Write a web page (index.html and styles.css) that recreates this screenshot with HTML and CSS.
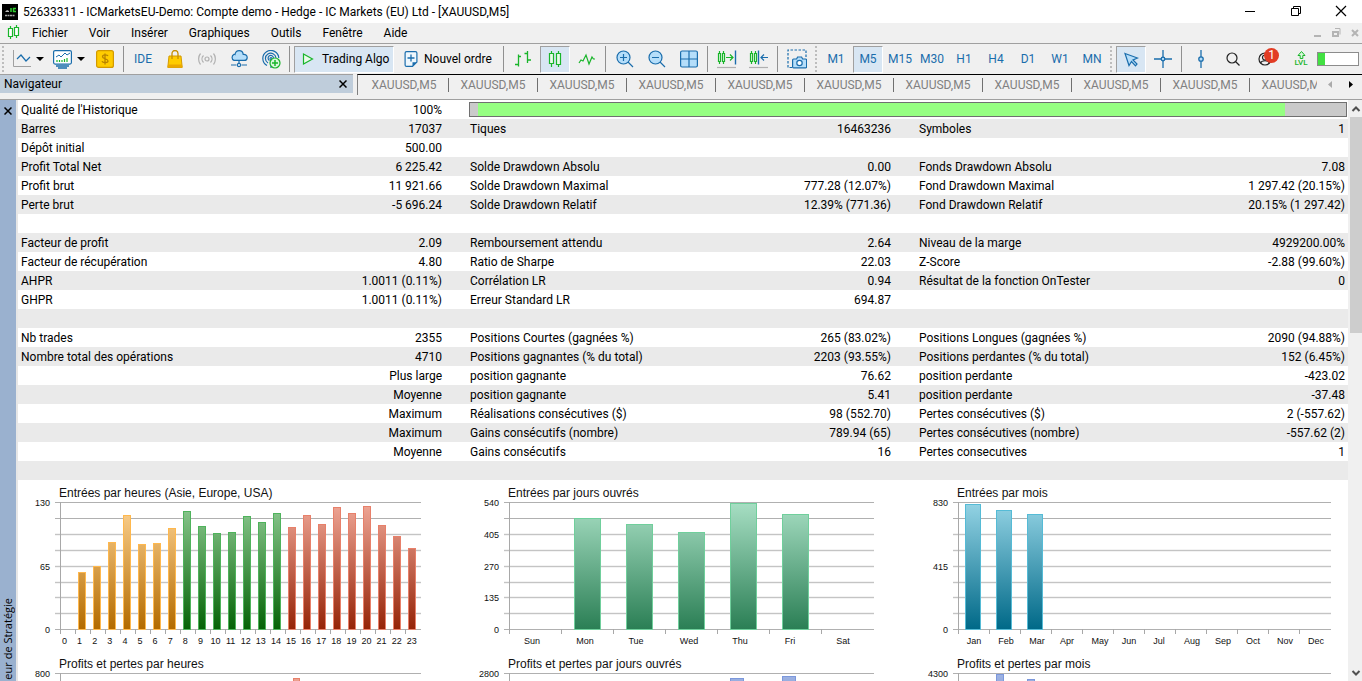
FILE: index.html
```html
<!DOCTYPE html>
<html lang="fr">
<head>
<meta charset="utf-8">
<title>52633311 - ICMarketsEU-Demo</title>
<link rel="stylesheet" href="styles.css">
</head>
<body>
<header class="titlebar">
  <svg class="app-icon" width="16" height="16" viewBox="0 0 16 16"><rect width="16" height="16" fill="#000"/><path d="M3 8l2-2 2 1v1z" fill="#bbb"/><path d="M9 4v4M14 4.500h-2.500v3h2.500" stroke="#2fd02f" stroke-width="1.500" fill="none"/><path d="M3 11.500h10" stroke="#aaa" stroke-width="1.500" stroke-dasharray="2 .5"/></svg>
  <h1 class="title">52633311 - ICMarketsEU-Demo: Compte demo - Hedge - IC Markets (EU) Ltd - [XAUUSD,M5]</h1>
  <div class="win-buttons">
    <button class="win-btn" aria-label="Réduire"><svg width="12" height="12"><path d="M1 6.500h10" stroke="#000"/></svg></button>
    <button class="win-btn" aria-label="Restaurer"><svg width="12" height="12" fill="none" stroke="#000"><path d="M1.500 3.500h7v7h-7zM3.500 3.500v-2h7v7h-2"/></svg></button>
    <button class="win-btn" aria-label="Fermer"><svg width="12" height="12"><path d="M1 1l10 10M11 1L1 11" stroke="#000" stroke-width="1.200"/></svg></button>
  </div>
</header>
<nav class="menubar">
  <svg class="menu-icon" width="13" height="16" fill="#fff" stroke="#19b52a" stroke-width="1.200"><path d="M3.500 1v13M9.500 0v13"/><path d="M1.500 3.500h4v8h-4zM7.500 2.500h4v8h-4z"/></svg>
  <button class="menu">Fichier</button><button class="menu">Voir</button><button class="menu">Insérer</button><button class="menu">Graphiques</button><button class="menu">Outils</button><button class="menu">Fenêtre</button><button class="menu">Aide</button>
  <div class="mdi-buttons">
    <svg width="9" height="10"><path d="M1 8h7" stroke="#b4b4b4" stroke-width="2"/></svg>
    <svg width="9" height="10" fill="none" stroke="#b4b4b4"><path d="M1 4h5v4H1z" stroke-width="2"/><path d="M3 .500h5v6"/></svg>
    <svg width="9" height="10"><path d="M1 2l6 6M7 2L1 8" stroke="#b4b4b4" stroke-width="2"/></svg>
  </div>
</nav>
<div class="toolbar">
  <span class="grip first"></span>
  <button class="drop" aria-label="Graphique"><svg width="18" height="18" fill="none"><path d="M.500 0v16.500H18" stroke="#a0a0a0"/><path d="M4 9l4-4 5 6 4-4" stroke="#1a6dac" stroke-width="1.200"/></svg><i class="caret"></i></button>
  <button class="drop" aria-label="Indicateurs"><svg width="19" height="20" fill="none"><rect x=".6" y="1.600" width="17.800" height="13.500" rx="1.500" fill="#fff" stroke="#1a6dac" stroke-width="1.200"/><path d="M3 8l3-2 2 2 4-4 2 2 3-2" stroke="#1a6dac"/><path d="M4 13v-2M6.500 13v-2M9 13v-2M11.500 13v-3M14 13v-4" stroke="#19b52a" stroke-width="1.200"/><path d="M3 17h13M5 19h9" stroke="#1a6dac" stroke-width="1.500"/></svg><i class="caret"></i></button>
  <button class="tool" aria-label="Dollar"><svg width="18" height="18"><rect x=".6" y=".6" width="16.800" height="16.800" rx="2" fill="#fc0" stroke="#d39a00" stroke-width="1.200"/><path d="M12 6c-.5-1.400-5.500-1.700-5.500.7 0 2.300 5.500 1.800 5.500 4.200 0 2.200-5.500 2-6 .2M9 3.500v11" fill="none" stroke="#b88300" stroke-width="1.300"/></svg></button>
  <span class="sep"></span>
  <button class="tool tf">IDE</button>
  <button class="tool" aria-label="Market"><svg width="16" height="18"><path d="M2 6h12l1.200 11.400H.8z" fill="#fc0" stroke="#d39a00"/><path d="M1 14.500h14l.4 3H.6z" fill="#eba800"/><path d="M5 9V3.500a3 3 0 0 1 6 0V9" fill="none" stroke="#c68e00" stroke-width="1.300"/></svg></button>
  <button class="tool" aria-label="Signaux"><svg width="18" height="14" fill="none" stroke="#b0b0b0" stroke-width="1.200"><circle cx="9" cy="7" r="2"/><path d="M5.500 3.500c-2 2-2 5 0 7M12.500 3.500c2 2 2 5 0 7M2.500 1.500c-2.500 3-2.500 8 0 11M15.500 1.500c2.500 3 2.500 8 0 11"/></svg></button>
  <button class="tool" aria-label="VPS"><svg width="18" height="18" stroke="#1a6dac" stroke-width="1.200"><path d="M4 10.400a3.300 3.300 0 0 1 0-6c.5 0 .8 0 1 .1C5.500 2 7.200.7 9.200.7c2.300 0 3.700 1.500 4 3.700 2.800-.2 4 1.400 4 3s-1.200 3-3 3z" fill="#b5defa"/><path d="M9 10.500v3M1 15h5.500M11.500 15H17" fill="none"/><circle cx="9" cy="15" r="1.600" fill="#fff"/></svg></button>
  <button class="tool" aria-label="Connexion"><svg width="19" height="19" fill="none" stroke="#1a6dac" stroke-width="1.200"><path d="M5 15.500A8 8 0 1 1 16.800 8M6 13A5.300 5.300 0 1 1 14 8M7.500 10.500A2.700 2.700 0 1 1 11.500 8"/><circle cx="9" cy="8.500" r="1"/><path d="M9 10v8"/><circle cx="13" cy="13" r="5" fill="#d9f7dc" stroke="#19b52a"/><path d="M13 10v6M10 13h6" stroke="#19b52a" stroke-width="1.500"/></svg></button>
  <span class="sep"></span>
  <button class="wide pressed"><svg width="12" height="12"><path d="M1.500 1l9 5-9 5z" fill="#eafbea" stroke="#19b52a" stroke-width="1.200"/></svg>Trading Algo</button>
  <button class="wide order"><svg width="14" height="18"><path d="M2.600 1.600h8.800q1.500 0 1.500 1.500v9l-4.400 4.300H2.600q-1.500 0-1.500-1.500V3.100q0-1.500 1.500-1.500z" fill="#eef7fd" stroke="#1a6dac" stroke-width="1.200"/><path d="M8.500 16.500v-4.300H13z" fill="#1a6dac"/><path d="M7 4.500v7M3.500 8h7" stroke="#1a6dac" stroke-width="1.300"/></svg>Nouvel ordre</button>
  <span class="sep"></span>
  <button class="tool" aria-label="Barres"><svg width="18" height="18" fill="none" stroke="#19b52a" stroke-width="1.300"><path d="M4.500 4.500v12M1 14.500h3.500M4.500 6.500H7M13.500 1v12M10.500 3.500h3M13.500 10H17"/></svg></button>
  <button class="tool pressed" aria-label="Chandeliers"><svg width="14" height="18" fill="#eafbea" stroke="#19b52a" stroke-width="1.200"><path d="M3.500 1v16M10.500 1v16"/><path d="M1.500 3.500h4v10h-4zM8.500 3.500h4v11h-4z"/></svg></button>
  <button class="tool" aria-label="Ligne"><svg width="18" height="14"><path d="M1 11l2-3 2 1 3-6 3 9 3-7 1.500 2H17" fill="none" stroke="#19b52a" stroke-width="1.200"/></svg></button>
  <span class="sep"></span>
  <button class="tool" aria-label="Zoom avant"><svg width="18" height="18" stroke="#1a6dac" stroke-width="1.200"><circle cx="7.500" cy="7.500" r="6.500" fill="#b5defa"/><path d="M4 7.500h7M7.500 4v7M12 12l5 5"/></svg></button>
  <button class="tool" aria-label="Zoom arrière"><svg width="18" height="18" stroke="#1a6dac" stroke-width="1.200"><circle cx="7.500" cy="7.500" r="6.500" fill="#b5defa"/><path d="M4 7.500h7M12 12l5 5"/></svg></button>
  <button class="tool" aria-label="Mosaïque"><svg width="18" height="18" stroke="#1a6dac" stroke-width="1.200"><rect x=".6" y="1" width="16.800" height="16" rx="1.500" fill="#b5defa"/><path d="M9 1v16M1 9h16"/></svg></button>
  <span class="sep"></span>
  <button class="tool" aria-label="Défilement"><svg width="20" height="20" fill="none" stroke="#19b52a" stroke-width="1.200"><path d="M2.500 2v13M6.500 2v13"/><path d="M1.500 4.500h2v8h-2zM5.500 4.500h2v8h-2z" fill="#eafbea"/><path d="M9 8.500h7M13 5.500l3 3-3 3"/><path d="M18.500 1.500v14" stroke="#1a6dac" stroke-width="1.400"/><path d="M0 18.500h19" stroke="#b0b0b0"/></svg></button>
  <button class="tool" aria-label="Décalage"><svg width="20" height="20" fill="none" stroke="#19b52a" stroke-width="1.200"><path d="M2.500 2v13M6.500 2v13"/><path d="M1.500 4.500h2v8h-2zM5.500 4.500h2v8h-2z" fill="#eafbea"/><path d="M9.500 1.500v14" stroke="#1a6dac" stroke-width="1.400"/><path d="M19 8.500h-7M15 5.500l-3 3 3 3" stroke="#1a6dac"/><path d="M0 18.500h19" stroke="#b0b0b0"/></svg></button>
  <span class="sep"></span>
  <button class="tool" aria-label="Capture"><svg width="20" height="20" fill="none" stroke="#1a6dac" stroke-width="1.200"><path d="M5 18.500H1V1h18v8" stroke-dasharray="2.500 1.500"/><path d="M6.600 10h3l1-2h4l1 2h3q1 0 1 1v7q0 .8-1 .8h-12q-1 0-1-.8v-7q0-1 1-1z" fill="#b5defa"/><circle cx="12.500" cy="14" r="2.700" fill="#fff"/></svg></button>
  <span class="grip"></span>
  <button class="tool tf">M1</button><button class="tool tf pressed">M5</button><button class="tool tf">M15</button><button class="tool tf">M30</button><button class="tool tf">H1</button><button class="tool tf">H4</button><button class="tool tf">D1</button><button class="tool tf">W1</button><button class="tool tf">MN</button>
  <span class="grip"></span>
  <button class="tool pressed" aria-label="Curseur"><svg width="15" height="15"><path d="M1 1.500l12.500 4.500-4.500 2 4 4-1.500 1.800-4-4.300-2.500 4z" fill="#b5defa" stroke="#1a6dac" stroke-width="1.200"/></svg></button>
  <button class="tool" aria-label="Réticule"><svg width="18" height="18" stroke="#1a6dac" stroke-width="1.300"><path d="M9 0v18M0 9h18"/><circle cx="9" cy="9" r="1.800" fill="#b5defa"/></svg></button>
  <span class="sep"></span>
  <button class="tool" aria-label="Ligne verticale"><svg width="18" height="18" stroke="#1a6dac" stroke-width="1.300"><path d="M9 0v18"/><circle cx="9" cy="9" r="2.200" fill="#b5defa"/></svg></button>
  <button class="tool" aria-label="Rechercher"><svg width="14" height="14" fill="none" stroke="#222" stroke-width="1.200"><circle cx="6" cy="6" r="5"/><path d="M9.500 9.500l4 4"/></svg></button>
  <button class="tool profile" aria-label="Profil"><svg width="14" height="14" fill="none" stroke="#222" stroke-width="1.200"><circle cx="7" cy="7" r="6"/><circle cx="7" cy="5.500" r="2.500"/><path d="M2.500 11c1-3 8-3 9 0"/></svg><span class="badge">1</span></button>
  <div class="level"><svg width="9" height="8"><path d="M3.200 7.500v-3H1l3.500-4 3.500 4H5.800v3z" fill="#d9f7dc" stroke="#19b52a"/></svg><span>LVL</span></div>
  <div class="meter"><i class="meter-fill"></i></div>
</div>
<div class="dock">
  <div class="navhead"><span>Navigateur</span><button class="close" aria-label="Fermer le navigateur"><svg width="8" height="8"><path d="M.500.500l7 7M7.500.500l-7 7" stroke="#000" stroke-width="1.500"/></svg></button></div>
  <div class="tabs">
    <div class="tablist"><button class="tab">XAUUSD,M5</button><button class="tab">XAUUSD,M5</button><button class="tab">XAUUSD,M5</button><button class="tab">XAUUSD,M5</button><button class="tab">XAUUSD,M5</button><button class="tab">XAUUSD,M5</button><button class="tab">XAUUSD,M5</button><button class="tab">XAUUSD,M5</button><button class="tab">XAUUSD,M5</button><button class="tab">XAUUSD,M5</button><button class="tab">XAUUSD,M5</button></div>
    <div class="tabnav"><svg width="4" height="7"><path d="M4 0v7L0 3.500z" fill="#aaa"/></svg><svg width="4" height="7"><path d="M0 0v7l4-3.500z" fill="#000"/></svg></div>
  </div>
</div>
<main class="tester">
  <aside class="strip"><button class="close" aria-label="Fermer le testeur"><svg width="8" height="8"><path d="M.500.500l7 7M7.500.500l-7 7" stroke="#000" stroke-width="1.500"/></svg></button><span class="strip-text">eur de Stratégie</span></aside>
  <section class="report">
    <table class="stats">
      <colgroup><col class="c"><col class="c"><col class="c"><col class="c"><col><col></colgroup>
      <tbody>
      <tr><td>Qualité de l'Historique</td><td>100%</td><td colspan="4" class="quality"><div class="bar"><i class="bar-fill"></i></div></td></tr>
      <tr><td>Barres</td><td>17037</td><td>Tiques</td><td>16463236</td><td>Symboles</td><td>1</td></tr>
      <tr><td>Dépôt initial</td><td>500.00</td><td></td><td></td><td></td><td></td></tr>
      <tr><td>Profit Total Net</td><td>6 225.42</td><td>Solde Drawdown Absolu</td><td>0.00</td><td>Fonds Drawdown Absolu</td><td>7.08</td></tr>
      <tr><td>Profit brut</td><td>11 921.66</td><td>Solde Drawdown Maximal</td><td>777.28 (12.07%)</td><td>Fond Drawdown Maximal</td><td>1 297.42 (20.15%)</td></tr>
      <tr><td>Perte brut</td><td>-5 696.24</td><td>Solde Drawdown Relatif</td><td>12.39% (771.36)</td><td>Fond Drawdown Relatif</td><td>20.15% (1 297.42)</td></tr>
      <tr><td></td><td></td><td></td><td></td><td></td><td></td></tr>
      <tr><td>Facteur de profit</td><td>2.09</td><td>Remboursement attendu</td><td>2.64</td><td>Niveau de la marge</td><td>4929200.00%</td></tr>
      <tr><td>Facteur de récupération</td><td>4.80</td><td>Ratio de Sharpe</td><td>22.03</td><td>Z-Score</td><td>-2.88 (99.60%)</td></tr>
      <tr><td>AHPR</td><td>1.0011 (0.11%)</td><td>Corrélation LR</td><td>0.94</td><td>Résultat de la fonction OnTester</td><td>0</td></tr>
      <tr><td>GHPR</td><td>1.0011 (0.11%)</td><td>Erreur Standard LR</td><td>694.87</td><td></td><td></td></tr>
      <tr><td></td><td></td><td></td><td></td><td></td><td></td></tr>
      <tr><td>Nb trades</td><td>2355</td><td>Positions Courtes (gagnées %)</td><td>265 (83.02%)</td><td>Positions Longues (gagnées %)</td><td>2090 (94.88%)</td></tr>
      <tr><td>Nombre total des opérations</td><td>4710</td><td>Positions gagnantes (% du total)</td><td>2203 (93.55%)</td><td>Positions perdantes (% du total)</td><td>152 (6.45%)</td></tr>
      <tr><td></td><td>Plus large</td><td>position gagnante</td><td>76.62</td><td>position perdante</td><td>-423.02</td></tr>
      <tr><td></td><td>Moyenne</td><td>position gagnante</td><td>5.41</td><td>position perdante</td><td>-37.48</td></tr>
      <tr><td></td><td>Maximum</td><td>Réalisations consécutives ($)</td><td>98 (552.70)</td><td>Pertes consécutives ($)</td><td>2 (-557.62)</td></tr>
      <tr><td></td><td>Maximum</td><td>Gains consécutifs (nombre)</td><td>789.94 (65)</td><td>Pertes consécutives (nombre)</td><td>-557.62 (2)</td></tr>
      <tr><td></td><td>Moyenne</td><td>Gains consécutifs</td><td>16</td><td>Pertes consecutives</td><td>1</td></tr>
      <tr><td></td><td></td><td></td><td></td><td></td><td></td></tr>
      </tbody>
    </table>
    <div class="charts" id="charts"></div>
  </section>
  <div class="scroll"><svg width="10" height="17"><path d="M1.500 11L5 7.500 8.500 11" fill="none" stroke="#505050" stroke-width="2"/></svg><i class="thumb"></i><svg class="down" width="10" height="17"><path d="M1.500 7L5 10.500 8.500 7" fill="none" stroke="#505050" stroke-width="2"/></svg></div>
</main>
<script src="charts.js"></script>
</body>
</html>
```
FILE: styles.css
```css
* { box-sizing: border-box; }
body { margin: 0; height: 100vh; display: flex; flex-direction: column; overflow: hidden; background: #f0f0f0; color: #000; font: 12px/18px Roboto, "Open Sans", sans-serif; }
button { font: inherit; color: inherit; background: none; border: 0; padding: 0; margin: 0; white-space: nowrap; }
svg { display: block; flex: none; }
.titlebar { display: flex; align-items: center; height: 23px; background: #fff; padding-left: 2px; flex: none; }
.title { margin: 0 0 0 5px; font-size: 12px; font-weight: 400; white-space: nowrap; }
.win-buttons { display: flex; margin-left: auto; padding-bottom: 2px; }
.win-btn { width: 46px; display: flex; justify-content: center; align-items: center; }
.win-btn:last-child { width: 43px; }
.menubar { display: flex; align-items: center; height: 21px; padding: 0 2px 0 7px; border-bottom: 1px solid #a0a0a0; flex: none; }
.menu-icon { margin-right: 12px; }
.menu { margin-right: 21px; }
.mdi-buttons { display: flex; gap: 10px; margin-left: auto; }
.toolbar { display: flex; align-items: center; height: 30px; flex: none; }
.grip { width: 7px; height: 26px; background: repeating-linear-gradient(#bdbdbd 0 2px, transparent 2px 4px) 2px 0 / 2px 100% no-repeat; }
.grip.first { width: 8px; }
.sep { width: 6px; height: 26px; background: linear-gradient(#909090, #909090) 2px 0 / 1px 100% no-repeat; }
.drop { display: flex; align-items: center; gap: 5px; padding: 0 4px 0 5px; }
.caret { border: 4px solid transparent; border-top-color: #000; border-bottom: 0; }
.tool { width: 30px; height: 27px; margin: 0 1px; display: flex; align-items: center; justify-content: center; flex: none; }
.tf { color: #1a6dac; }
.pressed { background: #d8e6f3; border: 1px solid #fff; border-color: #a0a0a0 #fff #fff #a0a0a0; }
.wide { display: flex; align-items: center; gap: 8px; height: 27px; width: 100px; margin: 0 1px; padding-left: 7px; flex: none; }
.wide.order { width: 105px; margin: 0 0 0 1px; gap: 6px; padding-left: 8px; }
.profile { position: relative; }
.badge { position: absolute; left: 14px; top: 2px; width: 15px; height: 15px; border-radius: 50%; background: #e23c24; color: #fff; line-height: 15px; text-align: center; }
.level { width: 32px; margin-left: 4px; display: flex; flex-direction: column; align-items: center; color: #19b52a; font-size: 8px; font-weight: 500; line-height: 8px; }
.meter { width: 42px; height: 14px; border: 1px solid #8c8c8c; background: #fff; }
.meter-fill { display: block; width: 7px; height: 100%; background: #42e042; }
.dock { display: flex; height: 26px; border-bottom: 1px solid #a0a0a0; flex: none; }
.navhead { width: 353px; height: 19px; padding: 0 6px 0 4px; display: flex; align-items: center; justify-content: space-between; background: #bfcddb; border-top: 1px solid #a0a0a0; flex: none; }
.close { display: flex; }
.tabs { flex: 1; min-width: 0; display: flex; height: 21px; margin-left: 4px; border-left: 1px solid #808080; border-top: 1px solid #000; }
.tablist { display: flex; width: 959px; overflow: hidden; padding: 3px 0 2px 2px; }
.tab { width: 89px; flex: none; height: 14px; line-height: 14px; border-right: 1px solid #707070; color: #808080; }
.tabnav { display: flex; gap: 17px; padding: 6px 0 0 11px; }
.tester { flex: 1; min-height: 0; display: flex; }
.strip { width: 18px; background: #9ab1cf; border-right: 2px solid #e6e6e6; display: flex; flex-direction: column; justify-content: space-between; align-items: center; padding: 7px 0 1px; flex: none; }
.strip-text { writing-mode: vertical-rl; transform: rotate(180deg); font-family: "Open Sans", sans-serif; font-size: 11px; line-height: 16px; white-space: nowrap; }
.report { flex: 1; min-width: 0; background: #fff; overflow: hidden; }
.stats { width: 100%; border-collapse: collapse; table-layout: fixed; }
.c { width: 16.88%; }
.stats tr { height: 19px; }
.stats tr:nth-child(even) { background: #eaeaea; }
.stats td { padding: 2px 3px 0; height: 19px; line-height: 17px; white-space: nowrap; }
.stats td:nth-child(even) { text-align: right; padding-right: 25px; }
.stats td:last-child { padding-right: 3px; }
.stats td.quality { padding: 0 1px 0 2px; }
.bar { height: 15px; padding-left: 8px; background: #cacaca; border: 1px solid #707070; }
.bar-fill { display: block; width: 93%; height: 100%; background: #96ff82; }
.charts { display: grid; grid-template-columns: 33.76% 33.76% 1fr; }
.chart { height: 171px; overflow: hidden; font-family: "Liberation Sans", Arial, sans-serif; }
.chart text { fill: #111; }
.chart-title { font-size: 12px; }
.chart-label { font-size: 9px; }
.scroll { width: 14px; display: flex; flex-direction: column; align-items: center; background: #f0f0f0; padding-left: 2px; flex: none; }
.thumb { width: 12px; height: 216px; background: #cdcdcd; }
.down { margin-top: auto; }
```
FILE: charts.js
```js
const palettes = {
  asia: ["#ffd596", "#b36b00", "#ffb84d"],
  europe: ["#90cb94", "#066306", "#4fb35c"],
  usa: ["#f0a898", "#952408", "#e8806a"],
  days: ["#a8dfc4", "#2b7f55", "#70cf9c"],
  months: ["#95d4e5", "#006988", "#55bbd6"],
  profit: ["#9fb4e4", "#3050a0", "#7c98dc"]
};
const hours = Array.from({ length: 24 }, (_, i) => [String(i), 46.5 + 15.1 * i]);
const days = [["Sun", 65], ["Mon", 118], ["Tue", 169], ["Wed", 222], ["Thu", 273], ["Fri", 323], ["Sat", 376]];
const months = [["Jan", 58], ["Feb", 90], ["Mar", 121], ["Apr", 151], ["May", 184], ["Jun", 213], ["Jul", 243], ["Aug", 276], ["Sep", 307], ["Oct", 337], ["Nov", 369], ["Dec", 400]];
const hourTops = [92, 86, 62, 35, 64, 63, 48, 31, 46, 53, 52, 36, 42, 33, 47, 35, 44, 27, 33, 26, 45, 56, 68];
const session = i => (i < 7 ? "asia" : i < 14 ? "europe" : "usa");

const charts = [
  { title: "Entrées par heures (Asie, Europe, USA)", end: 403, step: 15, y: ["130", "", "65", "", "0"], x: hours, bars: hourTops.map((t, i) => [60 + 15 * i, 8, t, session(i)]) },
  { title: "Entrées par jours ouvrés", end: 407, step: 52, y: ["540", "405", "270", "135", "0"], x: days, bars: [38, 44, 52, 23, 34].map((t, i) => [107 + 52 * i, 27, t, "days"]) },
  { title: "Entrées par mois", end: 415, step: 31, y: ["830", "", "415", "", "0"], x: months, bars: [24, 30, 34].map((t, i) => [49 + 31 * i, 16, t, "months"]) },
  { title: "Profits et pertes par heures", end: 403, step: 15, y: ["800"], x: [], bars: [[275, 7, 27, "usa"]] },
  { title: "Profits et pertes par jours ouvrés", end: 407, step: 52, y: ["2800"], x: [], bars: [[263, 14, 27, "profit"], [315, 14, 25, "profit"]] },
  { title: "Profits et pertes par mois", end: 415, step: 31, y: ["4300"], x: [], bars: [[80, 8, 23, "profit"], [111, 8, 28, "profit"]] }
];

function draw(c, n) {
  const used = [...new Set(c.bars.map(b => b[3]))];
  let s = "<defs>";
  for (const u of used) s += `<linearGradient id="${u}${n}" gradientUnits="userSpaceOnUse" x1="0" y1="22" x2="0" y2="149"><stop offset="0" stop-color="${palettes[u][0]}"/><stop offset="1" stop-color="${palettes[u][1]}"/></linearGradient>`;
  s += "</defs>";
  for (let i = 0; i < 9; i++) {
    const y = Math.round(22 + i * 15.9) + 0.5;
    if (i > 1 && i < 8) s += `<path d="M37 ${y}H${c.end}" stroke="#e8e8e8" stroke-width="2"/>`;
    s += `<path d="M37 ${y}H${c.end}" stroke="${i > 1 && i < 8 ? "#c4c4c4" : "#b0b0b0"}"/>`;
  }
  s += '<path d="M42.5 22V154" stroke="#a8a8a8"/>';
  for (let x = 42.5 + c.step; x < c.end - 2; x += c.step) s += `<path d="M${x} 149v5" stroke="#a8a8a8"/>`;
  for (const [x, w, top, u] of c.bars) s += `<rect x="${x + 0.5}" y="${top + 0.5}" width="${w - 1}" height="${149 - top}" fill="url(#${u}${n})" stroke="${palettes[u][2]}"/>`;
  s += `<text class="chart-title" x="41" y="17">${c.title}</text>`;
  c.y.forEach((t, i) => { if (t) s += `<text class="chart-label" x="32" y="${Math.round(26 + i * 31.8)}" text-anchor="end">${t}</text>`; });
  for (const [t, x] of c.x) s += `<text class="chart-label" x="${x}" y="164" text-anchor="middle">${t}</text>`;
  return `<div class="chart"><svg width="430" height="171">${s}</svg></div>`;
}
document.getElementById("charts").innerHTML = charts.map(draw).join("");
```
